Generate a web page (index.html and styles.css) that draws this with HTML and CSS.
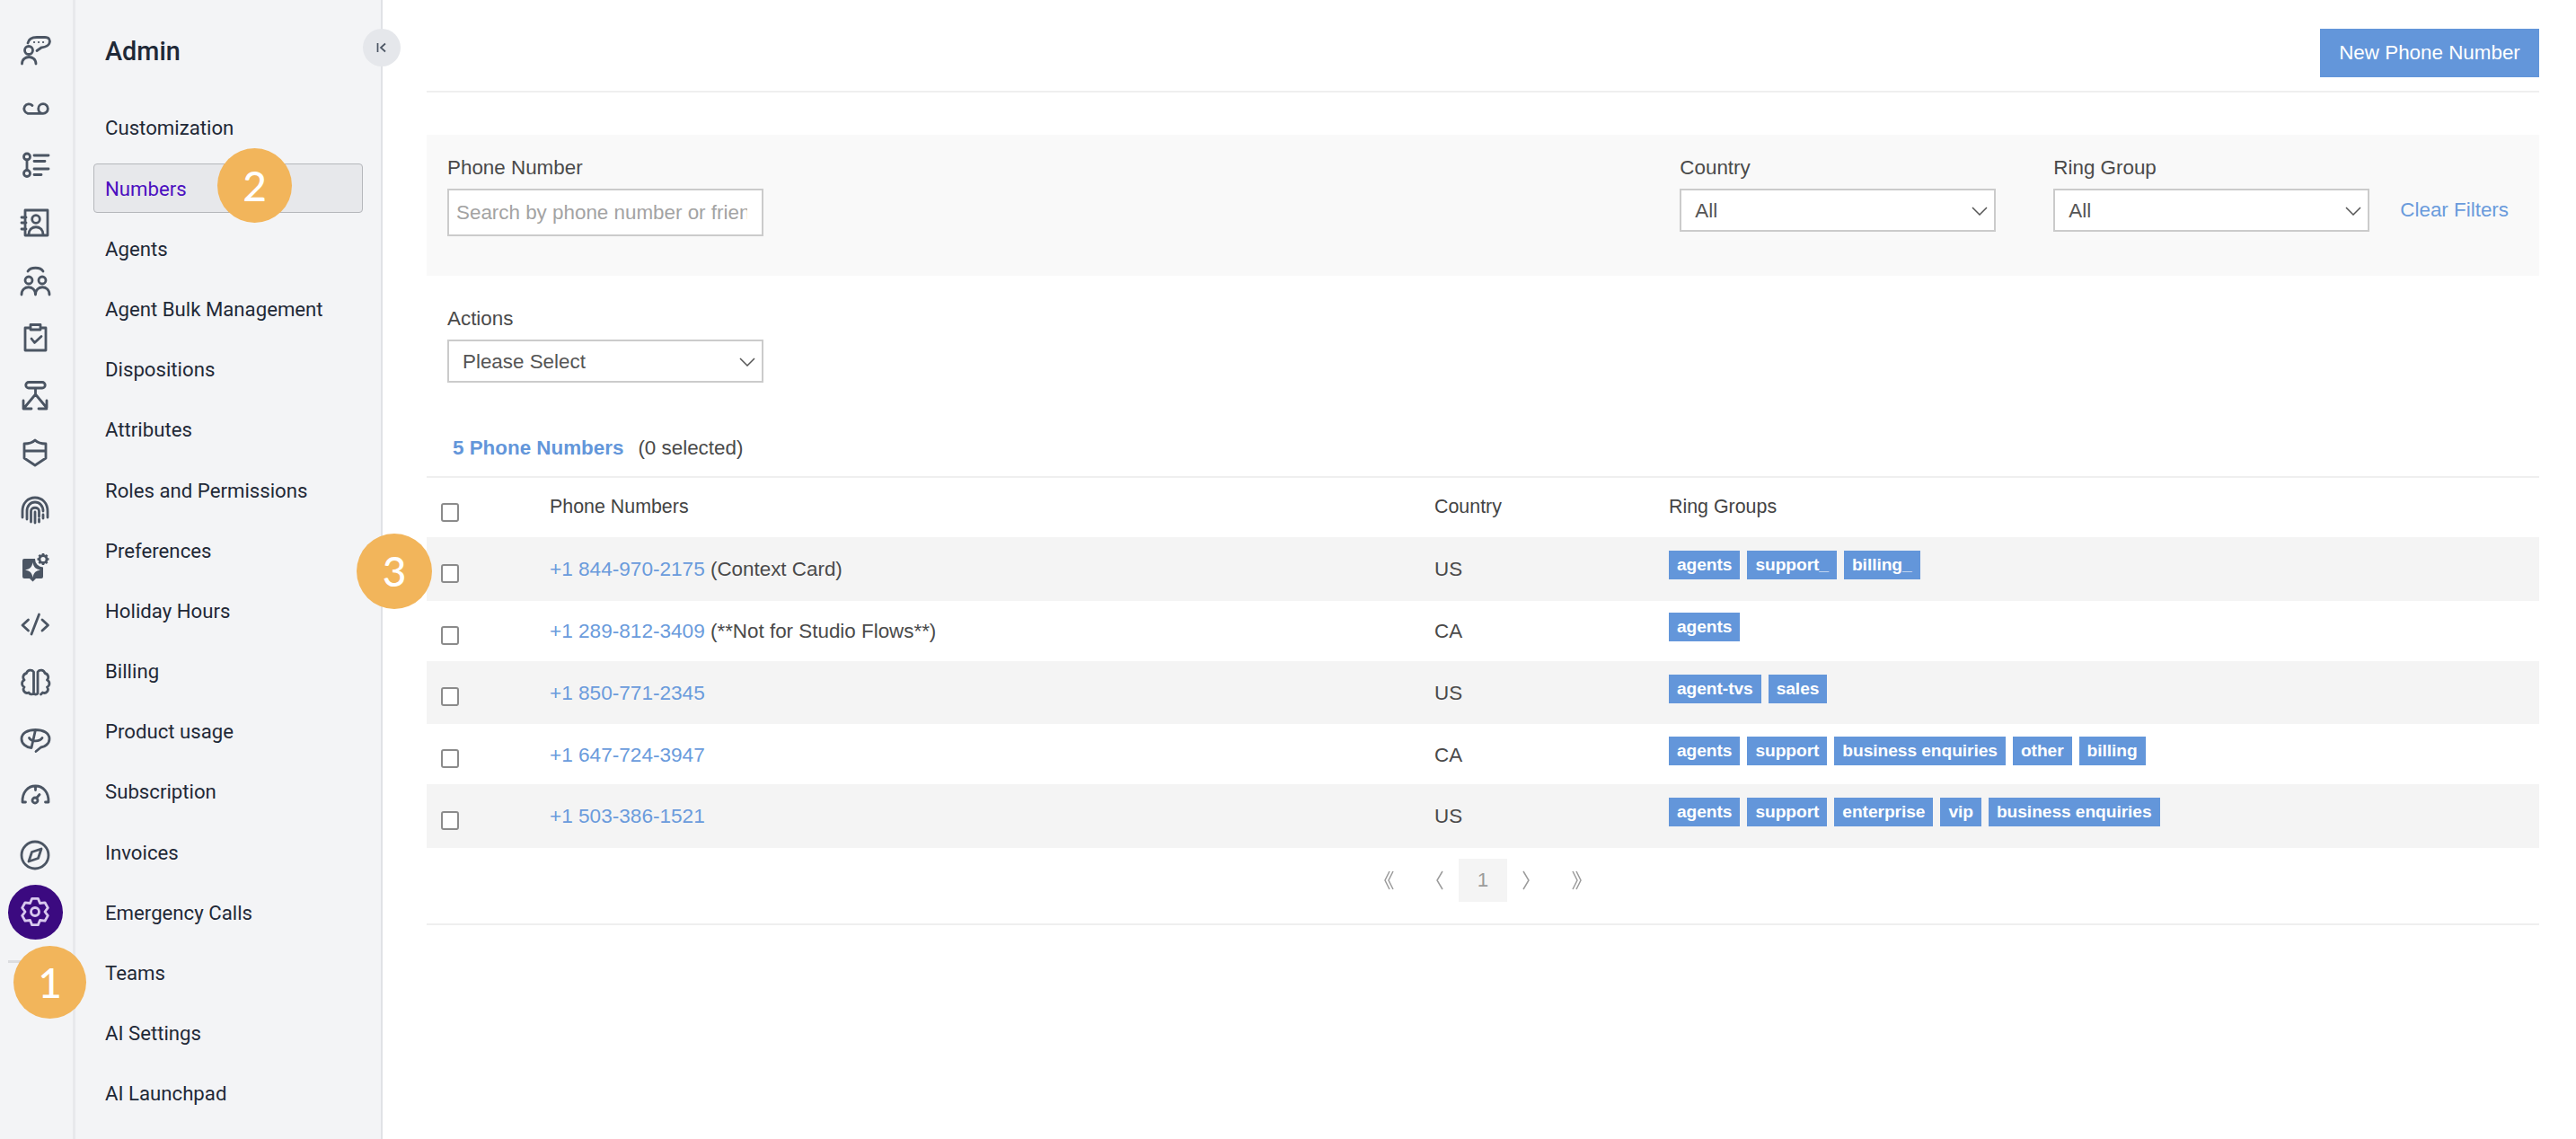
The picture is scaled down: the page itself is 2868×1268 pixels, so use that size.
FILE: index.html
```html
<!DOCTYPE html>
<html lang="en">
<head>
<meta charset="utf-8">
<title>Admin - Numbers</title>
<link rel="stylesheet" href="styles.css">
</head>
<body>
<div class="app">
  <nav class="rail">
    <svg class="ico" viewBox="0 0 40 40"><circle cx="13" cy="21" r="4.5"/><path d="M5.5 36C5.5 26 21 26 21 36"/><path d="M12 13C13 8 17 6.5 22 6.5H31C36 6.5 37 10 36 13C35 17 30 17.500 27 18L22 21.500"/><path class="dots" d="M19 12h.1M24 12h.1M29 12h.1"/></svg>
    <svg class="ico" viewBox="0 0 40 40"><path d="M17 18.500A5.300 5.300 0 1 0 12 27.300H29A5.300 5.300 0 1 0 29 16.700A5.300 5.300 0 0 0 29 27.300"/></svg>
    <svg class="ico" viewBox="0 0 40 40"><circle cx="11" cy="11.500" r="3.500"/><circle cx="11" cy="30" r="3.500"/><path d="M11 15V26.500M19 10H35M19 16.500H31M19 25H35M19 31.500H27"/></svg>
    <svg class="ico" viewBox="0 0 40 40"><path d="M9 7H34V35H9ZM5 15H10M5 21H10M5 28H10"/><circle cx="21" cy="17" r="4.300"/><path d="M13 34C13 23 29 23 29 34"/></svg>
    <svg class="ico" viewBox="0 0 40 40"><circle cx="13" cy="21" r="4"/><circle cx="28" cy="21" r="4"/><path d="M5 37C5 26 20.500 26 20.500 37M20.500 37C20.500 26 36 26 36 37M12 11C15 6 26 6 29 11"/></svg>
    <svg class="ico" viewBox="0 0 40 40"><path d="M15 10H9V35H32V10H26M15 6.500H26V12H15ZM16 22L19.500 26.500L27 19.500"/></svg>
    <svg class="ico" viewBox="0 0 40 40"><path d="M13 6.500H28A2 2 0 0 1 28 13H13A2 2 0 0 1 13 6.500ZM20.500 13V20L8 35M20.500 20L33 35M7 27V36H16M33 27V36H24"/></svg>
    <svg class="ico" viewBox="0 0 40 40"><path d="M8 11C12 11 17 10 20 7C23 10 28 11 32 11V27L20 35L8 27ZM8 19H32"/></svg>
    <svg class="ico" viewBox="0 0 40 40"><path d="M6 29V22C6 13 12 7 20 7C28 7 34 13 34 22V29M11 31V22C11 16 15 12 20 12C25 12 29 16 29 22M29 26V30M15.500 34V22C15.500 17 24.500 17 24.500 22V28M24.500 31V34M20 23V35"/></svg>
    <svg class="ico" viewBox="0 0 40 40"><path class="solid" d="M8 11H27A2 2 0 0 1 29 13V31A2 2 0 0 1 27 33H21L17.500 36.500L14 33H8A2 2 0 0 1 6 31V13A2 2 0 0 1 8 11Z"/><circle class="halo" cx="29" cy="11.500" r="9"/><path class="star" d="M17.500 15C18.500 20.500 20.500 22.500 26 23.500C20.500 24.500 18.500 26.500 17.500 32C16.500 26.500 14.500 24.500 9 23.500C14.500 22.500 16.500 20.500 17.500 15Z"/><circle cx="29" cy="11.500" r="4"/><path class="cog" d="M29 5V7.500M29 15.500V18M22.500 11.500H25M33 11.500H35.500M24.400 6.900L26.200 8.700M31.800 14.300L33.600 16.100M24.400 16.100L26.200 14.300M31.800 8.700L33.600 6.900"/></svg>
    <svg class="ico" viewBox="0 0 40 40"><path d="M12.500 15L6 21L12.500 27M28 15L34.500 21L28 27M16 31L24.500 9"/></svg>
    <svg class="ico" viewBox="0 0 40 40"><path d="M18.500 33V9A4.500 4.500 0 0 0 10.500 10.500A4.500 4.500 0 0 0 8 18A4.500 4.500 0 0 0 8 26A4 4 0 0 0 13 32A3.500 3.500 0 0 0 18.500 33A3 3 0 0 0 23 33V9A4.500 4.500 0 0 1 31 10.500A4.500 4.500 0 0 1 33.500 18A4.500 4.500 0 0 1 33.500 26A4 4 0 0 1 28.500 32L26.500 34"/></svg>
    <svg class="ico" viewBox="0 0 40 40"><path d="M20.500 9.500C29 9.500 36 13 36 19.500C36 25 31 28.500 26.500 29L21 33.500M16 29.500C10 29 5 25 5 19.500C5 13 12 9.500 20.500 9.500ZM13.500 18.500C16 23 25 23 28 18.500"/></svg>
    <svg class="ico" viewBox="0 0 40 40"><path d="M9.500 26H6C5.500 15 12 8 20.500 8C29 8 35.500 15 35 26H31.500M20.500 8V12.500M22 21L25 17.500"/><circle cx="20" cy="24" r="3"/></svg>
    <svg class="ico" viewBox="0 0 40 40"><circle cx="20" cy="21" r="15"/><path d="M27 14L23.500 24.500L13 28L16.500 17.500Z"/></svg>
    <div class="rail-active">
      <svg class="ico ico-light" viewBox="0 0 40 40"><path d="M16.600 5.400H23.400L25.500 10.500L31 9.800L34.300 15.600L31 20L34.300 24.400L31 30.200L25.500 29.500L23.400 34.600H16.600L14.500 29.500L9 30.200L5.700 24.400L9 20L5.700 15.600L9 9.800L14.500 10.500Z"/><circle cx="20" cy="20" r="4.500"/></svg>
    </div>
    <hr class="rail-rule">
  </nav>

  <aside class="side">
    <h2 class="side-title">Admin</h2>
    <button class="collapse" type="button" aria-label="Collapse"><svg viewBox="0 0 14 14"><path d="M2.500 2V12M11 2.500L6 7L11 11.500"/></svg></button>
    <ul class="side-list">
      <li class="side-item">Customization</li>
      <li class="side-item side-item-on">Numbers</li>
      <li class="side-item">Agents</li>
      <li class="side-item">Agent Bulk Management</li>
      <li class="side-item">Dispositions</li>
      <li class="side-item">Attributes</li>
      <li class="side-item">Roles and Permissions</li>
      <li class="side-item">Preferences</li>
      <li class="side-item">Holiday Hours</li>
      <li class="side-item">Billing</li>
      <li class="side-item">Product usage</li>
      <li class="side-item">Subscription</li>
      <li class="side-item">Invoices</li>
      <li class="side-item">Emergency Calls</li>
      <li class="side-item">Teams</li>
      <li class="side-item">AI Settings</li>
      <li class="side-item">AI Launchpad</li>
    </ul>
  </aside>

  <main class="main">
    <header class="top">
      <button class="primary" type="button">New Phone Number</button>
    </header>

    <section class="filters">
      <div class="field">
        <label class="label">Phone Number</label>
        <input class="search" type="text" placeholder="Search by phone number or friendly name">
      </div>
      <div class="field field-push">
        <label class="label">Country</label>
        <div class="select"><span>All</span><svg class="chev" viewBox="0 0 18 10"><path d="M1 1L9 9L17 1"/></svg></div>
      </div>
      <div class="field">
        <label class="label">Ring Group</label>
        <div class="select"><span>All</span><svg class="chev" viewBox="0 0 18 10"><path d="M1 1L9 9L17 1"/></svg></div>
      </div>
      <a class="clear">Clear Filters</a>
    </section>

    <section class="actions">
      <label class="label">Actions</label>
      <div class="select"><span>Please Select</span><svg class="chev" viewBox="0 0 18 10"><path d="M1 1L9 9L17 1"/></svg></div>
    </section>

    <div class="summary"><strong class="count">5 Phone Numbers</strong><span>(0 selected)</span></div>

    <table class="grid">
      <colgroup><col class="c-check"><col class="c-phone"><col class="c-country"><col></colgroup>
      <thead>
        <tr><th class="cell-check"><input class="check" type="checkbox"></th><th>Phone Numbers</th><th>Country</th><th>Ring Groups</th></tr>
      </thead>
      <tbody>
        <tr>
          <td class="cell-check"><input class="check" type="checkbox"></td>
          <td><a class="link">+1 844-970-2175</a> (Context Card)</td>
          <td>US</td>
          <td class="cell-tags"><span class="tag">agents</span><span class="tag">support_</span><span class="tag">billing_</span></td>
        </tr>
        <tr>
          <td class="cell-check"><input class="check" type="checkbox"></td>
          <td><a class="link">+1 289-812-3409</a> (**Not for Studio Flows**)</td>
          <td>CA</td>
          <td class="cell-tags"><span class="tag">agents</span></td>
        </tr>
        <tr>
          <td class="cell-check"><input class="check" type="checkbox"></td>
          <td><a class="link">+1 850-771-2345</a></td>
          <td>US</td>
          <td class="cell-tags"><span class="tag">agent-tvs</span><span class="tag">sales</span></td>
        </tr>
        <tr>
          <td class="cell-check"><input class="check" type="checkbox"></td>
          <td><a class="link">+1 647-724-3947</a></td>
          <td>CA</td>
          <td class="cell-tags"><span class="tag">agents</span><span class="tag">support</span><span class="tag">business enquiries</span><span class="tag">other</span><span class="tag">billing</span></td>
        </tr>
        <tr>
          <td class="cell-check"><input class="check" type="checkbox"></td>
          <td><a class="link">+1 503-386-1521</a></td>
          <td>US</td>
          <td class="cell-tags"><span class="tag">agents</span><span class="tag">support</span><span class="tag">enterprise</span><span class="tag">vip</span><span class="tag">business enquiries</span></td>
        </tr>
      </tbody>
    </table>

    <div class="pager">
      <span class="pg pg-first"><svg viewBox="0 0 14 22"><path d="M7 1L2 11L7 21M11 1L6 11L11 21"/></svg></span>
      <span class="pg"><svg viewBox="0 0 14 22"><path d="M10 1L4 11L10 21"/></svg></span>
      <span class="pg-cur">1</span>
      <span class="pg"><svg viewBox="0 0 14 22"><path d="M4 1L10 11L4 21"/></svg></span>
      <span class="pg pg-last"><svg viewBox="0 0 14 22"><path d="M3 1L8 11L3 21M7 1L12 11L7 21"/></svg></span>
    </div>
  </main>
</div>

<span class="step step-1">1</span>
<span class="step step-2">2</span>
<span class="step step-3">3</span>
</body>
</html>
```

FILE: styles.css
```css
* { box-sizing: border-box; }
html, body { margin: 0; height: 100%; overflow: hidden; background: #fff; }
body { font-family: "Liberation Sans", Arial, sans-serif; font-size: 22.4px; color: #4a4a4a; position: relative; }

.app { display: flex; height: 1268px; }

/* icon rail */
.rail {
  width: 84px; flex: none; background: #f3f4f6;
  border-right: 3px solid #e8e9ec; padding: 35px 3px 0 0;
  display: flex; flex-direction: column; align-items: center; gap: 24px;
}
.ico { width: 40px; height: 40px; flex: none; display: block; fill: none; stroke: #4b5563; stroke-width: 2.8; stroke-linecap: round; stroke-linejoin: round; }
.ico .dots { stroke-width: 2.2; }
.ico .solid { fill: #4b5563; stroke: none; }
.ico .star { fill: #f3f4f6; stroke: none; }
.ico .halo { fill: #f3f4f6; stroke: none; }
.ico .cog { stroke-width: 2.6; stroke-linecap: butt; }
.ico-light { stroke: #d8c8ee; }
.rail-active {
  width: 61px; height: 61px; margin: -10.5px 0; border-radius: 50%;
  background: #3b0a80; display: flex; align-items: center; justify-content: center; flex: none;
}
.rail-rule { width: 61px; height: 3px; margin: 10px 0 0; border: 0; background: #dcdde0; flex: none; }

/* text sidebar */
.side { width: 342px; flex: none; background: #f3f4f6; border-right: 2px solid #e0e2e6; position: relative; }
.side-title { margin: 0; height: 115px; padding: 37px 0 0 33px; font: 500 28.8px/40px Roboto, "Liberation Sans", sans-serif; color: #1f2937; }
.collapse {
  position: absolute; right: -22px; top: 32px; width: 42px; height: 42px; padding: 0;
  border: 0; border-radius: 50%; background: #e5e7eb;
  display: flex; align-items: center; justify-content: center;
}
.collapse svg { width: 14px; height: 14px; fill: none; stroke: #4b5563; stroke-width: 1.7; }
.side-list { list-style: none; margin: 0; padding: 0 20px; display: flex; flex-direction: column; gap: 12.2px; }
.side-item {
  height: 55px; padding-left: 12px; display: flex; align-items: center;
  font: 400 22.2px/1 Roboto, "Liberation Sans", sans-serif; color: #1f2937;
  border: 1px solid transparent; border-radius: 4px;
}
.side-item-on { background: #e7e8eb; border-color: #b5b7bb; color: #4c0fc0; }

/* main */
.main { flex: 1; min-width: 0; padding: 0 41px 0 49px; }
.top { height: 103px; border-bottom: 2px solid #efefef; padding-top: 32px; display: flex; justify-content: flex-end; align-items: flex-start; }
.primary { width: 244px; height: 54px; border: 0; padding: 0; background: #6396da; color: #fff; font: inherit; }

.filters { margin-top: 47px; height: 157px; background: #f9f9f9; padding: 24px 34px 0 23px; display: flex; align-items: flex-start; gap: 64px; }
.field { width: 352px; flex: none; }
.field-push { margin-left: auto; }
.label { display: block; height: 26px; line-height: 26px; margin-bottom: 10px; color: #4a4a4a; }
.search { display: block; width: 100%; height: 53px; padding: 0 16px 0 8px; border: 2px solid #cbcbcb; background: #fff; font: inherit; color: #4a4a4a; }
.search::placeholder { color: #a3a3a3; opacity: 1; }
.select { height: 48px; width: 352px; padding: 2px 7px 0 15px; border: 2px solid #cbcbcb; background: #fff; display: flex; align-items: center; justify-content: space-between; color: #555; }
.chev { width: 18px; height: 10px; fill: none; stroke: #555; stroke-width: 1.5; }
.clear { margin: 36px 0 0 -30px; height: 48px; line-height: 48px; color: #6a9bdc; white-space: nowrap; }

.actions { margin: 35px 0 0 23px; }
.summary { height: 106px; border-bottom: 2px solid #efefef; padding: 60px 0 0 29px; line-height: 26px; display: flex; gap: 16px; }
.count { color: #6396da; }

/* table */
.grid { width: 100%; border-collapse: collapse; table-layout: fixed; }
.c-check { width: 137px; }
.c-phone { width: 985px; }
.c-country { width: 261px; }
.grid th { height: 66px; padding: 0 0 2px; text-align: left; font-weight: 400; font-size: 21.4px; color: #444; }
.grid td { padding: 2px 0 0; vertical-align: middle; color: #4a4a4a; }
.grid tbody tr:nth-child(odd) td { height: 70.500px; background: #f4f4f4; }
.grid tbody tr:nth-child(even) td { height: 67px; background: #fff; }
.grid .cell-check { padding: 10px 0 0 16px; }
.grid th.cell-check { padding: 10px 0 0 16px; }
.check { appearance: none; display: block; width: 20px; height: 21px; margin: 0; border: 2px solid #8b8b8b; border-radius: 3px; background: #fff; }
.link { color: #6a9bdc; font-size: 22.6px; }
.grid .cell-tags { padding: 2px 0 10px; }
.tag { display: inline-block; height: 32px; padding: 0 9px; margin-right: 8px; background: #6396da; color: #fff; font-size: 19.2px; font-weight: 700; letter-spacing: -0.07px; line-height: 32px; vertical-align: top; }

/* pagination */
.pager { height: 86px; padding-top: 12px; border-bottom: 2px solid #efefef; display: flex; justify-content: center; align-items: flex-start; gap: 6px; }
.pg { width: 30px; height: 48px; display: flex; align-items: center; justify-content: center; }
.pg svg { width: 14px; height: 22px; fill: none; stroke: #9b9b9b; stroke-width: 1.5; }
.pg-first { margin-right: 20px; }
.pg-last { margin-left: 20px; }
.pg-cur { width: 54px; height: 48px; background: #f4f4f4; color: #9b9b9b; line-height: 48px; text-align: center; }

/* tutorial step markers */
.step { position: absolute; border-radius: 50%; background: #f2b55b; color: #fff; font: 500 46px/1 Lato, "Open Sans", sans-serif; display: flex; align-items: center; justify-content: center; }
.step-1 { left: 15px; top: 1053px; width: 81px; height: 81px; }
.step-2 { left: 242px; top: 165px; width: 83px; height: 83px; }
.step-3 { left: 397px; top: 594px; width: 84px; height: 84px; }
```
